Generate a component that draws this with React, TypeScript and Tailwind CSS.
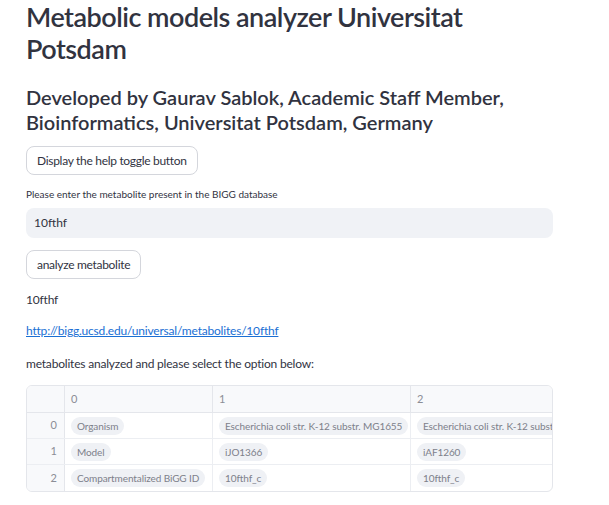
import React from "react";

const rows = [
  { idx: 0, cells: ["Organism", "Escherichia coli str. K-12 substr. MG1655", "Escherichia coli str. K-12 substr. MG1655"] },
  { idx: 1, cells: ["Model", "iJO1366", "iAF1260"] },
  { idx: 2, cells: ["Compartmentalized BiGG ID", "10fthf_c", "10fthf_c"] },
];

function Pill({ text }: { text: string }) {
  return (
    <span className="inline-block whitespace-nowrap rounded-full bg-[#eff1f5] px-[6px] leading-[18px] text-[10px] tracking-[-0.1px] text-[#7d808a]">
      {text}
    </span>
  );
}

function DataTable() {
  return (
    <div className="w-[527px] overflow-hidden rounded-md border border-[#e4e6eb]">
      <div className="w-[700px]">
        <div className="grid grid-cols-[38px_148px_198px_316px] h-[27px] bg-[#f8f9fb] border-b border-[#e4e6eb] text-[11px] text-[#8b8d96]">
          <div className="border-r border-[#e4e6eb]" />
          <div className="flex items-center px-[6px] border-r border-[#e4e6eb]">0</div>
          <div className="flex items-center px-[6px] border-r border-[#e4e6eb]">1</div>
          <div className="flex items-center px-[6px]">2</div>
        </div>
        {rows.map((r, i) => (
          <div
            key={r.idx}
            className={`grid grid-cols-[38px_148px_198px_316px] h-[26px] ${i < rows.length - 1 ? "border-b border-[#eceef2]" : ""}`}
          >
            <div className="flex items-center justify-end pr-[7px] bg-[#f8f9fb] border-r border-[#e4e6eb] text-[11px] text-[#8b8d96]">
              {r.idx}
            </div>
            {r.cells.map((c, j) => (
              <div key={j} className={`flex items-center px-[6px] overflow-hidden ${j < 2 ? "border-r border-[#eceef2]" : ""}`}>
                <Pill text={c} />
              </div>
            ))}
          </div>
        ))}
      </div>
    </div>
  );
}

export default function App() {
  return (
    <div className="min-h-screen bg-white text-[#31333f] font-['Lato','Noto_Sans',sans-serif]">
      <div className="pl-[26px] w-[553px] pt-px flex flex-col">
        <h1 className="text-[27px] leading-[32px] font-semibold tracking-[-0.5px]">
          Metabolic models analyzer Universitat
          <br />
          Potsdam
        </h1>
        <h2 className="mt-[20px] text-[20px] leading-[25px] font-semibold tracking-[0px]">
          Developed by Gaurav Sablok, Academic Staff Member,
          <br />
          Bioinformatics, Universitat Potsdam, Germany
        </h2>
        <div className="mt-[11px]">
          <button className="h-[29px] px-[10px] rounded-lg border border-[#d4d6dc] bg-white text-[12px] tracking-[-0.3px] text-[#31333f]">
            Display the help toggle button
          </button>
        </div>
        <label className="mt-[11px] text-[10px] leading-[16px] text-[#31333f]">
          Please enter the metabolite present in the BIGG database
        </label>
        <div className="mt-[6px] h-[30px] rounded-lg bg-[#f0f2f6] flex items-center px-[8px] text-[12px]">
          10fthf
        </div>
        <div className="mt-[12px]">
          <button className="h-[29px] px-[10px] rounded-lg border border-[#d4d6dc] bg-white text-[12px] tracking-[-0.3px] text-[#31333f]">
            analyze metabolite
          </button>
        </div>
        <p className="mt-[11px] text-[12px] tracking-[-0.2px] leading-[20px]">10fthf</p>
        <p className="mt-[11px] text-[12px] tracking-[-0.2px] leading-[20px]">
          <a href="#" className="text-[#1a6fd4] underline">
            http://bigg.ucsd.edu/universal/metabolites/10fthf
          </a>
        </p>
        <p className="mt-[13px] text-[12px] tracking-[-0.2px] leading-[20px]">
          metabolites analyzed and please select the option below:
        </p>
        <div className="mt-[11px]">
          <DataTable />
        </div>
      </div>
    </div>
  );
}
